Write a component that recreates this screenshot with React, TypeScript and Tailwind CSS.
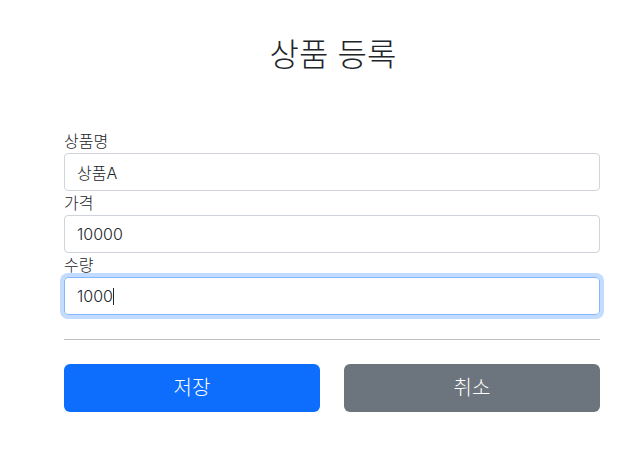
const font = { fontFamily: '"Segoe UI", Inter, "Noto Sans CJK KR", sans-serif' };

function Field({ label, value, focused }: { label: string; value: string; focused?: boolean }) {
  return (
    <div>
      <label className="block text-base leading-6 font-light text-[#212529]">{label}</label>
      {focused ? (
        <div className="flex items-center w-full h-[38px] px-3 rounded-[4px] border border-[#86b7fe] text-base font-light text-[#212529] shadow-[0_0_0_4px_rgba(13,110,253,0.25)]">
          <span>{value}</span>
          <span className="inline-block w-px h-[17px] bg-[#212529]" />
        </div>
      ) : (
        <input
          readOnly
          defaultValue={value}
          className="block w-full h-[38px] px-3 rounded-[4px] border border-[#ced4da] text-base font-light text-[#212529] outline-none"
        />
      )}
    </div>
  );
}

export default function App() {
  return (
    <div className="min-h-[456px] bg-white" style={font}>
      <div className="ml-[64px] w-[536px] pt-[36px]">
        <h2 className="text-center text-[32px] leading-[38px] font-light text-[#212529] pl-[2px]">상품 등록</h2>

        <form className="mt-[55px]">
          <Field label="상품명" value="상품A" />
          <Field label="가격" value="10000" />
          <Field label="수량" value="1000" focused />
        </form>

        <hr className="my-6 border-t border-[#bfbfbf]" />

        <div className="flex gap-6">
          <button className="flex-1 h-12 rounded-[6px] bg-[#0d6efd] text-xl font-light text-white">저장</button>
          <button className="flex-1 h-12 rounded-[6px] bg-[#6c757d] text-xl font-light text-white">취소</button>
        </div>
      </div>
    </div>
  );
}
